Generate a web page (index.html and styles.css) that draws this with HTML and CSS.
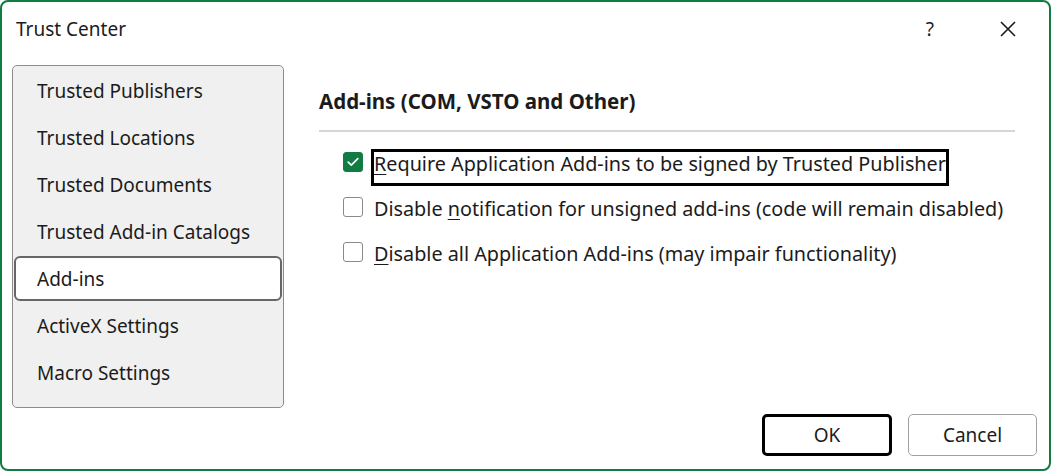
FILE: index.html
```html
<!DOCTYPE html>
<html>
<head>
<meta charset="utf-8">
<link rel="stylesheet" href="styles.css">
</head>
<body>
<div class="window">
  <div class="titlebar">
    <div class="title">Trust Center</div>
    <div class="tb-btns">
      <span class="help">?</span>
      <svg class="close" width="18" height="18" viewBox="0 0 18 18"><path d="M2 2 L16 16 M16 2 L2 16" stroke="#1a1a1a" stroke-width="1.6" fill="none"/></svg>
    </div>
  </div>
  <div class="content">
    <div class="sidebar">
      <div class="nav-item">Trusted Publishers</div>
      <div class="nav-item">Trusted Locations</div>
      <div class="nav-item">Trusted Documents</div>
      <div class="nav-item">Trusted Add-in Catalogs</div>
      <div class="nav-item selected">Add-ins</div>
      <div class="nav-item">ActiveX Settings</div>
      <div class="nav-item">Macro Settings</div>
    </div>
    <div class="main">
      <div class="heading">Add-ins (COM, VSTO and Other)</div>
      <div class="sep"></div>
      <div class="opts">
        <div class="opt">
          <span class="cb checked"><svg width="12" height="10" viewBox="0 0 12 10"><path d="M1.2 5.2 L4.3 8.2 L10.8 1.6" stroke="#fff" stroke-width="1.7" fill="none" stroke-linecap="round" stroke-linejoin="round"/></svg></span>
          <span class="label focus"><u>R</u>equire Application Add-ins to be signed by Trusted Publisher</span>
        </div>
        <div class="opt">
          <span class="cb"></span>
          <span class="label">Disable <u>n</u>otification for unsigned add-ins (code will remain disabled)</span>
        </div>
        <div class="opt">
          <span class="cb"></span>
          <span class="label"><u>D</u>isable all Application Add-ins (may impair functionality)</span>
        </div>
      </div>
    </div>
  </div>
  <div class="footer">
    <button class="btn primary">OK</button>
    <button class="btn">Cancel</button>
  </div>
</div>
</body>
</html>
```

FILE: styles.css
```css
html, body {
  margin: 0;
  padding: 0;
  background: #fff;
}
body {
  font-family: "Noto Sans", "Open Sans", sans-serif;
  color: #1b1b1b;
}
.window {
  width: 1051px;
  height: 471px;
  box-sizing: border-box;
  border: 2px solid #107c41;
  border-radius: 8px;
  background: #fff;
  display: flex;
  flex-direction: column;
  overflow: hidden;
}
.titlebar {
  height: 54px;
  display: flex;
  align-items: center;
  justify-content: space-between;
  padding-left: 14px;
  flex-shrink: 0;
}
.title {
  font-size: 19px;
}
.tb-btns {
  display: flex;
  align-items: center;
  gap: 65px;
  padding-right: 32px;
}
.help {
  font-size: 19px;
  color: #1b1b1b;
}
.close {
  display: block;
}
.content {
  display: flex;
  padding-left: 10px;
  padding-top: 9px;
  flex: 1;
}
.sidebar {
  width: 272px;
  height: 343px;
  box-sizing: border-box;
  background: #f0f0f0;
  border: 1px solid #8c8c8c;
  border-radius: 5px;
  padding: 1px 1px 0 1px;
  flex-shrink: 0;
}
.nav-item {
  height: 47px;
  box-sizing: border-box;
  display: flex;
  align-items: center;
  padding-left: 23px;
  font-size: 19px;
  color: #1b1b1b;
}
.nav-item.selected {
  background: #fff;
  border: 2px solid #666;
  border-radius: 6px;
  height: 45px;
  margin: 1px 0 1px 0;
  padding-left: 21px;
}
.main {
  margin-left: 35px;
  width: 696px;
  padding-top: 23px;
}
.heading {
  font-weight: bold;
  font-size: 20.5px;
  height: 26px;
  line-height: 26px;
}
.sep {
  height: 2px;
  background: #d6d6d6;
  margin-top: 16px;
}
.opts {
  padding-left: 24px;
  padding-top: 17px;
  display: flex;
  flex-direction: column;
  gap: 8px;
}
.opt {
  display: flex;
  align-items: flex-start;
  height: 37px;
}
.cb {
  width: 20px;
  height: 20px;
  box-sizing: border-box;
  border: 1.5px solid #8a8a8a;
  border-radius: 3px;
  background: #fff;
  display: flex;
  align-items: center;
  justify-content: center;
  flex-shrink: 0;
  margin: 3px 8px 0 0;
}
.cb.checked {
  background: #107c41;
  border-color: #107c41;
}
.label {
  font-size: 19.8px;
  color: #1b1b1b;
  padding: 0 0 7px 0;
  line-height: 24px;
  border: 3px solid transparent;
  white-space: nowrap;
}
.label.focus {
  border-color: #000;
}
.label u {
  text-decoration-thickness: 1px;
  text-underline-offset: 3px;
}
.footer {
  display: flex;
  justify-content: flex-end;
  gap: 16px;
  padding: 0 12px 13px 0;
}
.btn {
  font-family: "Noto Sans", "Open Sans", sans-serif;
  font-size: 19px;
  color: #1b1b1b;
  width: 129px;
  height: 42px;
  background: #fff;
  border: 1px solid #a0a0a0;
  border-radius: 5px;
  padding: 0;
}
.btn.primary {
  width: 130px;
  border: 3px solid #000;
}
```
